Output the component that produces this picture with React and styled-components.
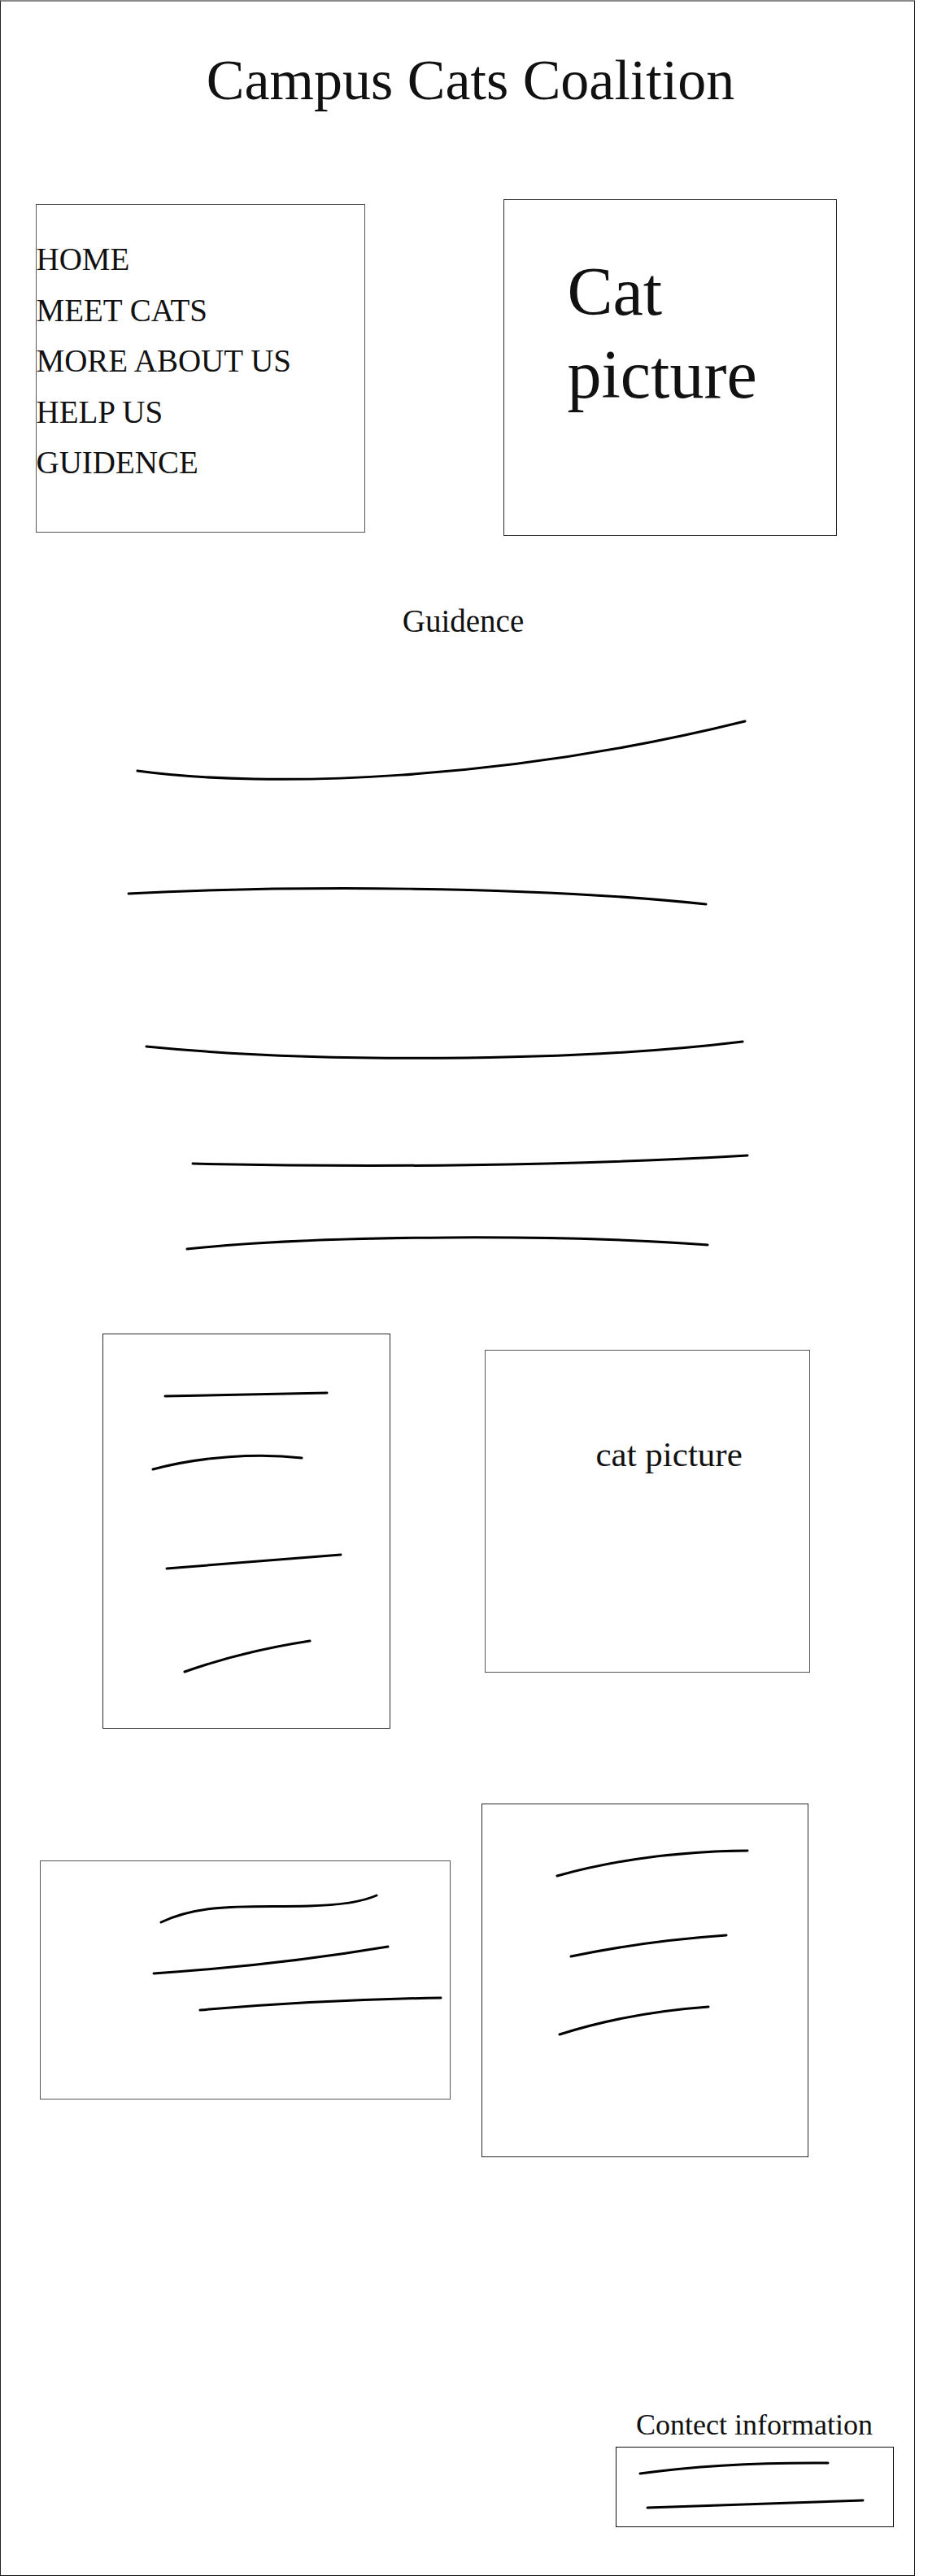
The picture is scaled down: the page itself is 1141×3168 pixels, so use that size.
import React from "react";
import styled, { createGlobalStyle } from "styled-components";

const GlobalStyle = createGlobalStyle`
  html, body {
    margin: 0;
    padding: 0;
    background: #ffffff;
  }
  body {
    font-family: "Liberation Serif", "DejaVu Serif", serif;
    color: #111111;
  }
  * {
    box-sizing: border-box;
  }
`;

const navItems = ["HOME", "MEET CATS", "MORE ABOUT US", "HELP US", "GUIDENCE"];

// sketched placeholder strokes, coordinates inside each drawing
const guideLines = [
  "M168 88 C 330 110, 620 100, 915 27",
  "M157 239 C 350 229, 650 229, 867 252",
  "M179 427 C 380 447, 700 447, 912 421",
  "M236 571 C 450 576, 700 574, 918 561",
  "M229 676 C 400 658, 700 658, 869 671",
];

const cardLines = [
  "M76 76 L 275 72",
  "M61 166 C 120 150, 190 146, 244 152",
  "M78 288 L 292 271",
  "M100 415 Q 170 390, 254 377",
];

const wideLines = [
  "M148 75 C 200 50, 260 57, 330 55 C 370 54, 395 50, 413 42",
  "M139 138 Q 290 128, 427 105",
  "M196 183 Q 350 170, 492 168",
];

const tallLines = [
  "M92 88 Q 200 58, 326 57",
  "M109 187 Q 200 168, 300 161",
  "M95 283 Q 180 256, 278 249",
];

const contactLines = ["M29 32 Q 130 18, 260 19", "M38 74 Q 170 70, 303 65"];

const Scribble = ({ lines, width, height }) => (
  <Drawing width={width} height={height} viewBox={`0 0 ${width} ${height}`}>
    {lines.map((d, i) => (
      <path key={i} d={d} />
    ))}
  </Drawing>
);

const App = () => {
  return (
    <>
      <GlobalStyle />
      <Page>
        <Title>Campus Cats Coalition</Title>

        <Row $top={106} $left={42.5}>
          <Box $w={405} $h={404} $mt={6} $tone="#555">
            <NavList>
              {navItems.map((item) => (
                <NavItem key={item}>{item}</NavItem>
              ))}
            </NavList>
          </Box>
          <Box $w={410} $h={414} $ml={170}>
            <BigCaption>
              Cat
              <br />
              picture
            </BigCaption>
          </Box>
        </Row>

        <SectionTitle>Guidence</SectionTitle>
        <GuideArea>
          <Scribble lines={guideLines} width={1121} height={700} />
        </GuideArea>

        <Row $top={80} $left={124.5}>
          <Box $w={354} $h={486}>
            <Scribble lines={cardLines} width={351} height={483} />
          </Box>
          <Box $w={400} $h={397} $mt={20} $ml={116} $tone="#555">
            <SmallCaption>cat picture</SmallCaption>
          </Box>
        </Row>

        <Row $top={92} $left={47.5}>
          <Box $w={505} $h={294} $mt={70} $tone="#555">
            <Scribble lines={wideLines} width={502} height={291} />
          </Box>
          <Box $w={402} $h={435} $ml={38}>
            <Scribble lines={tallLines} width={399} height={432} />
          </Box>
        </Row>

        <Contact>
          <ContactTitle>Contect information</ContactTitle>
          <Box $w={342} $h={99} $mt={5} $tone="#111">
            <Scribble lines={contactLines} width={339} height={96} />
          </Box>
        </Contact>
      </Page>
    </>
  );
};

export default App;

const Page = styled.div`
  width: 1125px;
  height: 3168px;
  border-top: 2px solid #8a8a8a;
  border-left: 1.5px solid #222;
  border-right: 1.5px solid #111;
  border-bottom: 1.5px solid #111;
  display: flex;
  flex-direction: column;
  overflow: hidden;
`;

const Title = styled.h1`
  margin: 0;
  padding: 57px 0 0 32px;
  font-size: 70px;
  line-height: 80px;
  font-weight: normal;
  text-align: center;
`;

const Row = styled.div`
  display: flex;
  align-items: flex-start;
  padding-top: ${(p) => p.$top}px;
  padding-left: ${(p) => p.$left}px;
`;

const Box = styled.div`
  flex: none;
  width: ${(p) => p.$w}px;
  height: ${(p) => p.$h}px;
  margin-top: ${(p) => p.$mt || 0}px;
  margin-left: ${(p) => p.$ml || 0}px;
  border: 1.5px solid ${(p) => p.$tone || "#2a2a2a"};
  background: #ffffff;
`;

const NavList = styled.ul`
  list-style: none;
  margin: 0;
  padding: 36px 0 0 0;
`;

const NavItem = styled.li`
  font-size: 39px;
  line-height: 62.5px;
  white-space: nowrap;
`;

const BigCaption = styled.div`
  padding: 62px 0 0 78px;
  font-size: 84px;
  line-height: 102px;
`;

const SmallCaption = styled.div`
  padding: 102px 0 0 136px;
  font-size: 43px;
  line-height: 1.2;
`;

const SectionTitle = styled.h2`
  margin: 82px 0 0;
  padding-left: 14px;
  font-size: 39px;
  line-height: 1.2;
  font-weight: normal;
  text-align: center;
`;

const GuideArea = styled.div`
  margin-top: 72px;
  height: 700px;
`;

const Drawing = styled.svg`
  display: block;
  fill: none;
  stroke: #000;
  stroke-width: 3;
  stroke-linecap: round;
`;

const Contact = styled.div`
  align-self: flex-end;
  margin-top: 308px;
  margin-right: 25.5px;
  width: 342px;
  display: flex;
  flex-direction: column;
`;

const ContactTitle = styled.div`
  font-size: 36px;
  line-height: 1.2;
  text-align: center;
`;
